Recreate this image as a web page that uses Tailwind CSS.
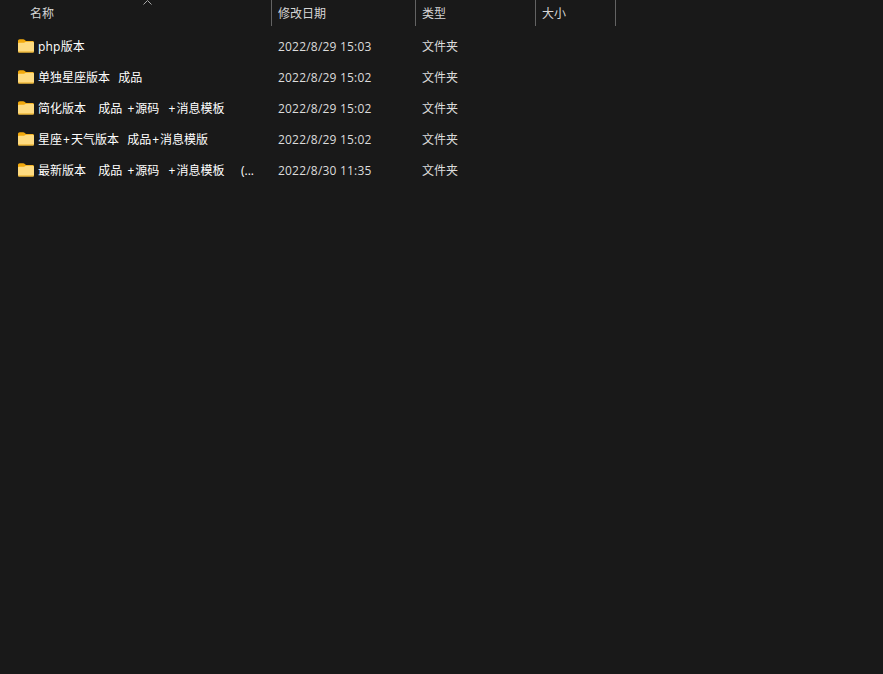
<!DOCTYPE html>
<html lang="zh-CN">
<head>
    <meta charset="UTF-8">
    <meta name="viewport" content="width=device-width, initial-scale=1.0">
    <title>文件列表</title>
    <script src="https://cdn.jsdelivr.net/npm/@tailwindcss/browser@4"></script>
</head>
<body class="bg-[#191919] min-h-screen overflow-hidden font-['Open_Sans','Noto_Sans_CJK_SC',sans-serif] text-xs">
    <svg class="hidden">
        <symbol id="folder" viewBox="0 0 16 14">
            <path d="M0 2C0 1 .7.3 1.7.3h3.6c.5 0 .9.2 1.2.5L8 2H14.5c.8 0 1.5.6 1.5 1.4V6H0z" fill="#f2a90c"/>
            <path d="M0 4.6c0-.5.4-.8.9-.8H6L8 2.8h6.6c.8 0 1.4.6 1.4 1.4v8c0 .8-.6 1.3-1.4 1.3H1.4C.6 13.5 0 13 0 12.2z" fill="#fedb80"/>
            <path d="M0 12.4h16c0 .6-.6 1.1-1.4 1.1H1.4C.6 13.5 0 13 0 12.4z" fill="#e8a91e"/>
        </symbol>
    </svg>

    <!-- 表头 -->
    <div class="relative grid grid-cols-[272px_144px_120px_80px] h-[26px] w-[616px] text-[#d6d6d6]">
        <svg class="absolute left-[143px] top-0 w-[9px] h-[5px]" viewBox="0 0 9 5" fill="none" stroke="#a8a8a8"><path d="M.5 4.5l4-4 4 4"/></svg>
        <div class="pl-[30px] pt-[6px] border-r border-[#636363]">名称</div>
        <div class="pl-[6px] pt-[6px] border-r border-[#636363]">修改日期</div>
        <div class="pl-[6px] pt-[6px] border-r border-[#636363]">类型</div>
        <div class="pl-[6px] pt-[6px] border-r border-[#636363]">大小</div>
    </div>

    <!-- 文件夹 -->
    <div class="mt-[5px] w-[616px] text-[#dcdcdc]">
        <div class="grid grid-cols-[272px_144px_120px_80px] h-[31px] items-center">
            <div class="flex items-center pl-[18px] text-white whitespace-pre [word-spacing:1px]">
                <svg class="w-4 h-[14px] mr-1 -mt-[2px]"><use href="#folder"/></svg><span class="tracking-[0.2px]">php版本</span>
            </div>
            <div class="pl-[6px] tracking-[0.2px]">2022/8/29 15:03</div>
            <div class="pl-[6px]">文件夹</div>
        </div>
        <div class="grid grid-cols-[272px_144px_120px_80px] h-[31px] items-center">
            <div class="flex items-center pl-[18px] text-white whitespace-pre [word-spacing:1px]">
                <svg class="w-4 h-[14px] mr-1 -mt-[2px]"><use href="#folder"/></svg><span>单独星座版本  成品</span>
            </div>
            <div class="pl-[6px] tracking-[0.2px]">2022/8/29 15:02</div>
            <div class="pl-[6px]">文件夹</div>
        </div>
        <div class="grid grid-cols-[272px_144px_120px_80px] h-[31px] items-center">
            <div class="flex items-center pl-[18px] text-white whitespace-pre [word-spacing:1px]">
                <svg class="w-4 h-[14px] mr-1 -mt-[2px]"><use href="#folder"/></svg><span>简化版本   成品 <span class="px-px">+</span>源码  <span class="px-px">+</span>消息模板</span>
            </div>
            <div class="pl-[6px] tracking-[0.2px]">2022/8/29 15:02</div>
            <div class="pl-[6px]">文件夹</div>
        </div>
        <div class="grid grid-cols-[272px_144px_120px_80px] h-[31px] items-center">
            <div class="flex items-center pl-[18px] text-white whitespace-pre [word-spacing:1px]">
                <svg class="w-4 h-[14px] mr-1 -mt-[2px]"><use href="#folder"/></svg><span>星座<span class="px-px">+</span>天气版本  成品<span class="px-px">+</span>消息模版</span>
            </div>
            <div class="pl-[6px] tracking-[0.2px]">2022/8/29 15:02</div>
            <div class="pl-[6px]">文件夹</div>
        </div>
        <div class="grid grid-cols-[272px_144px_120px_80px] h-[31px] items-center">
            <div class="flex items-center pl-[18px] text-white whitespace-pre [word-spacing:1px]">
                <svg class="w-4 h-[14px] mr-1 -mt-[2px]"><use href="#folder"/></svg><span>最新版本   成品 <span class="px-px">+</span>源码  <span class="px-px">+</span>消息模板    (...</span>
            </div>
            <div class="pl-[6px] tracking-[0.2px]">2022/8/30 11:35</div>
            <div class="pl-[6px]">文件夹</div>
        </div>
    </div>
</body>
</html>
